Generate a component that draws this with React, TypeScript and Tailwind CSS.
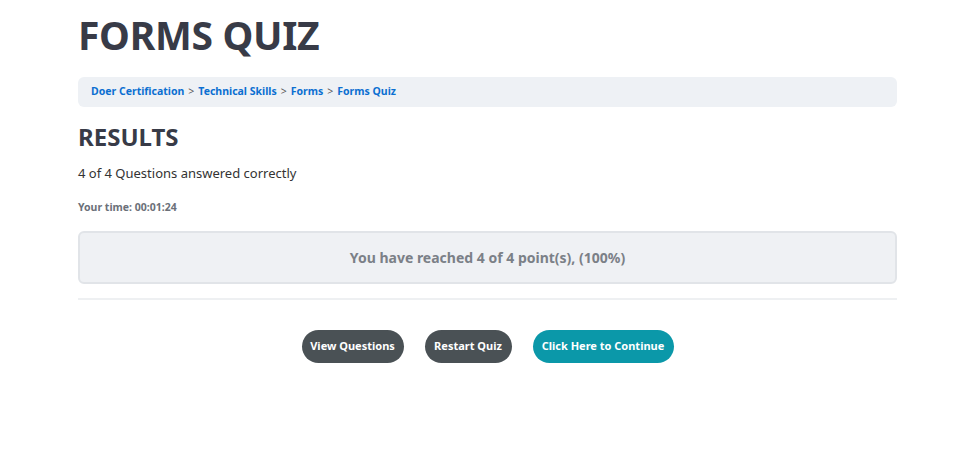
export default function App() {
  return (
    <div className="min-h-[456px] bg-white" style={{ fontFamily: '"Noto Sans", "Open Sans", sans-serif' }}>
      <div className="mx-auto w-[819px]">
        {/* Title */}
        <h1 className="pt-[9px] text-[39px] font-bold leading-[52px] tracking-[-0.3px] text-[#383b47]">FORMS QUIZ</h1>

        {/* Breadcrumb */}
        <div className="mt-[16px] flex h-[30px] items-center rounded-md bg-[#eef1f5] px-[13px] text-[10.5px] font-bold text-[#0b6fd1]">
          <span>Doer Certification</span>
          <span className="mx-[4px] font-normal text-[#555]">&gt;</span>
          <span>Technical Skills</span>
          <span className="mx-[4px] font-normal text-[#555]">&gt;</span>
          <span>Forms</span>
          <span className="mx-[4px] font-normal text-[#555]">&gt;</span>
          <span>Forms Quiz</span>
        </div>

        {/* Results */}
        <h2 className="mt-[15px] text-[24px] font-bold leading-[30px] text-[#383b47]">RESULTS</h2>
        <p className="mt-[12px] text-[13px] leading-[18px] text-[#333]">4 of 4 Questions answered correctly</p>
        <p className="mt-[17px] text-[10.5px] font-bold leading-[16px] text-[#6b7079]">Your time: 00:01:24</p>

        <div className="mt-[16px] flex h-[53px] items-center justify-center rounded-md border-2 border-[#e1e4e8] bg-[#eff1f4] text-[14px] font-bold text-[#7b8087]">
          You have reached 4 of 4 point(s), (100%)
        </div>

        <div className="mt-[14px] h-[2px] bg-[#eef0f2]" />

        {/* Actions */}
        <div className="mt-[30px] flex justify-center gap-[21px]">
          <button className="h-[33px] w-[102px] rounded-full bg-[#4a5155] text-[11px] font-bold text-white">View Questions</button>
          <button className="h-[33px] w-[87px] rounded-full bg-[#4a5155] text-[11px] font-bold text-white">Restart Quiz</button>
          <button className="h-[33px] w-[141px] rounded-full bg-[#0b98a9] text-[11px] font-bold text-white">Click Here to Continue</button>
        </div>
      </div>
    </div>
  );
}
